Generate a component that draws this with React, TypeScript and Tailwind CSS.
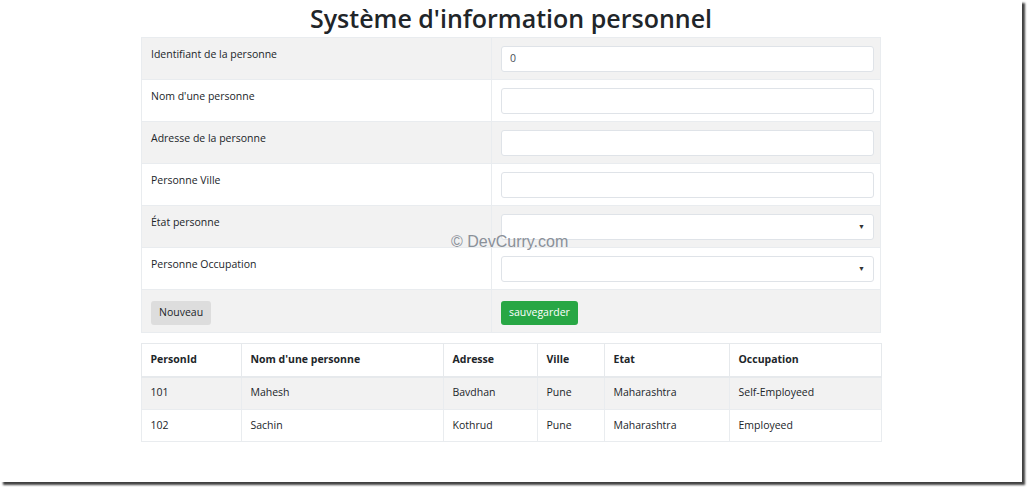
const formRows = [
  { label: 'Identifiant de la personne', kind: 'input', value: '0' },
  { label: "Nom d'une personne", kind: 'input', value: '' },
  { label: 'Adresse de la personne', kind: 'input', value: '' },
  { label: 'Personne Ville', kind: 'input', value: '' },
  { label: 'État personne', kind: 'select', value: '' },
  { label: 'Personne Occupation', kind: 'select', value: '' },
];

const people = [
  { id: 101, name: 'Mahesh', address: 'Bavdhan', city: 'Pune', state: 'Maharashtra', occupation: 'Self-Employeed' },
  { id: 102, name: 'Sachin', address: 'Kothrud', city: 'Pune', state: 'Maharashtra', occupation: 'Employeed' },
];

const headers = ['PersonId', "Nom d'une personne", 'Adresse', 'Ville', 'Etat', 'Occupation'];
const colWidths = ['w-[100px]', 'w-[202px]', 'w-[94px]', 'w-[67px]', 'w-[125px]', 'w-[152px]'];

function Field({ kind, value }: { kind: string; value: string }) {
  return (
    <div className="h-[26px] rounded-[3px] border border-[#dfe3e8] bg-white flex items-center justify-between px-[8px] text-[10.5px] text-[#495057]">
      <span>{value}</span>
      {kind === 'select' && <span className="text-[7px] text-[#333]">▼</span>}
    </div>
  );
}

export default function App() {
  return (
    <div className="w-[1028px] h-[487px] bg-white font-['Open_Sans',sans-serif] text-[#212529]">
      <div className="relative w-[1022px] h-[482px] bg-white shadow-[3px_3px_2px_rgba(0,0,0,0.75)] flex flex-col items-center">
        <h1 className="h-[37px] text-[25px] leading-[36px] font-semibold text-[#212529]">Système d'information personnel</h1>

        <div className="w-[740px] border border-[#e9ecef]">
          {formRows.map((row, i) => (
            <div key={row.label} className={`grid grid-cols-[350px_390px] h-[42px] border-b border-[#e9ecef] ${i % 2 === 0 ? 'bg-[#f2f2f2]' : 'bg-white'}`}>
              <div className="px-[9px] pt-[8px] text-[10.5px] leading-[17px] border-r border-[#e9ecef]">{row.label}</div>
              <div className="px-[8px] pl-[9px] pt-[8px]">
                <Field kind={row.kind} value={row.value} />
              </div>
            </div>
          ))}
          <div className="grid grid-cols-[350px_390px] h-[42px] bg-[#f2f2f2]">
            <div className="px-[9px] pt-[8px] border-r border-[#e9ecef]">
              <button className="h-[24px] px-[8px] rounded-[3px] bg-[#dddddd] text-[10.5px] text-[#212529]">Nouveau</button>
            </div>
            <div className="pl-[9px] pt-[8px]">
              <button className="h-[24px] px-[8px] rounded-[3px] bg-[#28a745] text-[10.5px] text-white">sauvegarder</button>
            </div>
          </div>
        </div>

        <table className="mt-[10px] w-[740px] table-fixed border-collapse text-[10.5px]">
          <thead>
            <tr className="h-[33px]">
              {headers.map((h, i) => (
                <th key={h} className={`${colWidths[i]} border border-b-2 border-[#e6e9ec] px-[9px] text-left font-bold`}>{h}</th>
              ))}
            </tr>
          </thead>
          <tbody>
            {people.map((p, i) => (
              <tr key={p.id} className={i % 2 === 0 ? 'h-[33px] bg-[#f2f2f2]' : 'h-[32px] bg-white'}>
                {[p.id, p.name, p.address, p.city, p.state, p.occupation].map((v, j) => (
                  <td key={j} className="border border-[#e9ecef] px-[9px]">{v}</td>
                ))}
              </tr>
            ))}
          </tbody>
        </table>

        <div className="absolute left-[451px] top-[230px] text-[16px] text-[#8a9099] font-['Liberation_Sans',sans-serif]">© DevCurry.com</div>
      </div>
    </div>
  );
}
